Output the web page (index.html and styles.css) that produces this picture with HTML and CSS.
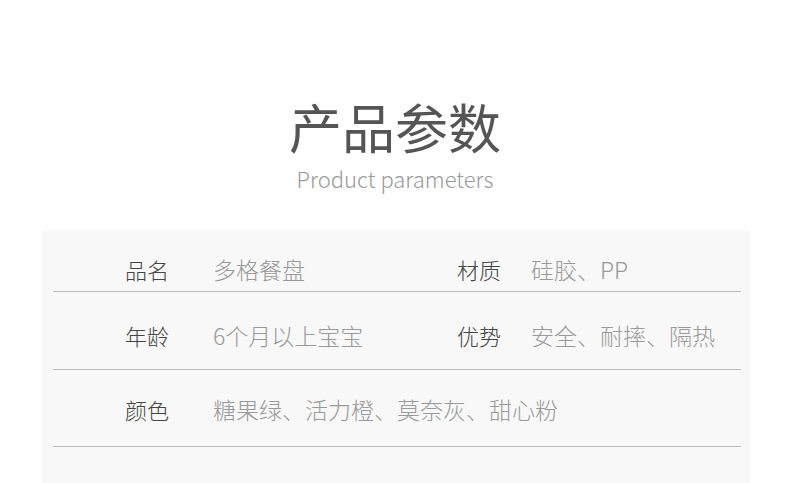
FILE: index.html
```html
<!DOCTYPE html>
<html lang="zh-CN">
<head>
    <meta charset="UTF-8">
    <meta name="viewport" content="width=device-width, initial-scale=1.0">
    <title>产品参数</title>
    <link rel="stylesheet" href="styles.css">
</head>
<body>
    <header class="heading">
        <h1>产品参数</h1>
        <p class="subtitle">Product parameters</p>
    </header>

    <section class="params">
        <div class="param-row row-first">
            <span class="label">品名</span>
            <span class="value">多格餐盘</span>
            <span class="label">材质</span>
            <span class="value">硅胶、PP</span>
        </div>
        <div class="param-row row-second">
            <span class="label">年龄</span>
            <span class="value">6个月以上宝宝</span>
            <span class="label">优势</span>
            <span class="value">安全、耐摔、隔热</span>
        </div>
        <div class="param-row row-third">
            <span class="label">颜色</span>
            <span class="value wide">糖果绿、活力橙、莫奈灰、甜心粉</span>
        </div>
    </section>
</body>
</html>
```

FILE: styles.css
```css
body {
    margin: 0;
    background-color: #fff;
    font-family: "Noto Sans CJK SC", "Noto Sans", sans-serif;
    font-weight: 300;
}
.heading {
    text-align: center;
    padding-top: 99px;
}
.heading h1 {
    margin: 0;
    font-size: 53px;
    line-height: 54px;
    font-weight: 400;
    color: #555;
}
.subtitle {
    margin: 12px 0 0;
    font-size: 22px;
    line-height: 26px;
    color: #999;
}
.params {
    margin: 39px 40px 0 42px;
    padding: 0 9px 40px 11px;
    background-color: #f8f8f8;
}
.param-row {
    display: grid;
    grid-template-columns: 88px 244px 74px 1fr;
    padding-left: 72px;
    border-bottom: 1px solid #bcbcbc;
    line-height: 22px;
}
.row-first {
    padding-top: 28px;
    padding-bottom: 11px;
}
.row-second {
    padding-top: 32px;
    padding-bottom: 23px;
}
.row-third {
    padding-top: 28px;
    padding-bottom: 26px;
}
.label {
    font-size: 22px;
    color: #444;
}
.value {
    font-size: 23px;
    color: #999;
}
.value.wide {
    grid-column: 2 / 5;
}
```
